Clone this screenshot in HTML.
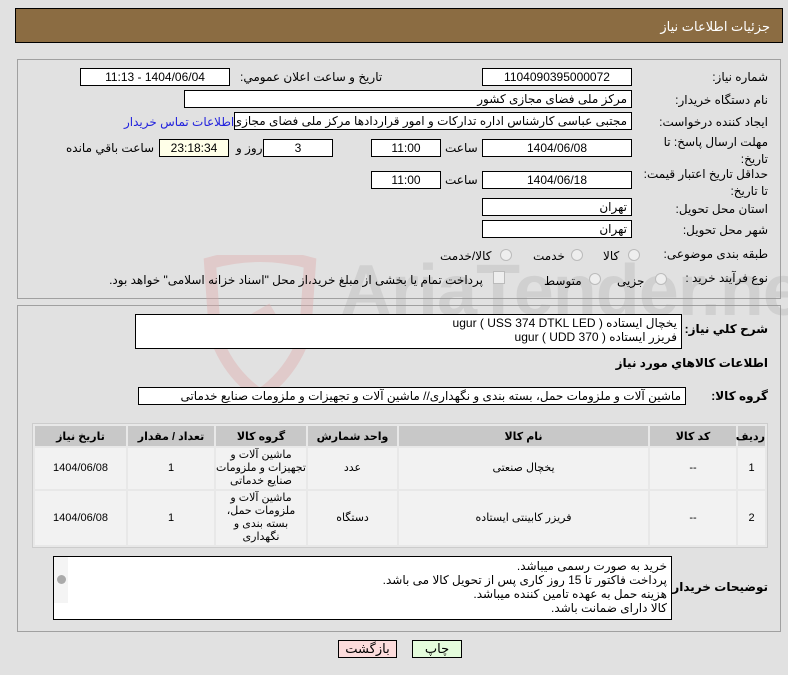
<!DOCTYPE html>
<html><head><meta charset="utf-8"><style>
body{margin:0;width:788px;height:675px;background:#e1e1e1;font-family:"Liberation Sans","DejaVu Sans",sans-serif;font-size:12px;color:#000;position:relative;overflow:hidden}
.a{position:absolute}
.hd{left:15px;top:8px;width:766px;height:33px;background:#8b6c42;border:1px solid #000}
.hd span{position:absolute;right:12px;top:10px;color:#fff;font-size:13px}
.pn{border:1px solid #a0a0a0}
.bx{position:absolute;background:#fff;border:1px solid #000;height:16px;line-height:16px;font-size:12px;direction:rtl;white-space:nowrap;overflow:hidden}
.c{text-align:center}
.r{padding-right:4px}
.l{position:absolute;direction:rtl;white-space:nowrap;font-size:12px}
.b{font-weight:bold;font-size:12px}
.rad{position:absolute;width:10px;height:10px;border-radius:50%;border:1px solid #bbb;background:#eee}
table{position:absolute;left:32px;top:423px;width:736px;border-collapse:separate;border-spacing:2px;background:#e8e8e8;border:1px solid #ccc;direction:rtl;font-size:11px;table-layout:fixed}
th{background:#c8c8c8;height:20px;font-weight:bold;padding:0}
td{background:#f2f2f2;text-align:center;padding:0;line-height:13px;overflow:hidden}
</style></head><body>
<div class="a hd"><span>جزئیات اطلاعات نیاز</span></div>
<div class="a pn" style="left:17px;top:59px;width:762px;height:238px"></div>
<div class="a pn" style="left:17px;top:305px;width:762px;height:325px"></div>

<svg class="a" style="left:200px;top:255px;opacity:.4" width="120" height="160" viewBox="0 0 120 160"><path d="M10 8 Q60 -6 110 8 L105 80 Q92 118 60 140 Q28 118 15 80 Z" fill="none" stroke="#e0a8a8" stroke-width="12"/><rect x="45" y="55" width="30" height="14" fill="#e0b0b0" transform="rotate(-30 60 62)"/></svg>
<div class="a" style="left:340px;top:250px;width:448px;height:110px;overflow:hidden;opacity:.22"><div style="font-size:72px;color:#999;font-weight:bold;white-space:nowrap;letter-spacing:-1px">AriaTender.neT</div></div>

<div class="l" style="right:20px;top:70px">شماره نیاز:</div>
<div class="bx c" style="left:482px;top:68px;width:148px">1104090395000072</div>
<div class="l" style="left:240px;top:70px">تاریخ و ساعت اعلان عمومي:</div>
<div class="bx c" style="left:80px;top:68px;width:148px">1404/06/04 - 11:13</div>

<div class="l" style="right:20px;top:93px">نام دستگاه خریدار:</div>
<div class="bx r" style="left:184px;top:90px;width:442px">مرکز ملی فضای مجازی کشور</div>

<div class="l" style="right:20px;top:115px">ایجاد کننده درخواست:</div>
<div class="bx r" style="left:234px;top:112px;width:392px">مجتبی عباسی کارشناس اداره تدارکات و امور قراردادها مرکز ملی فضای مجازی</div>
<div class="l" style="left:124px;top:115px;color:#2222dd">اطلاعات تماس خریدار</div>

<div class="l" style="right:20px;top:134px;line-height:17px;text-align:right">مهلت ارسال پاسخ: تا<br>تاریخ:</div>
<div class="bx c" style="left:482px;top:139px;width:148px">1404/06/08</div>
<div class="l" style="left:445px;top:141px">ساعت</div>
<div class="bx c" style="left:371px;top:139px;width:68px">11:00</div>
<div class="bx c" style="left:263px;top:139px;width:68px">3</div>
<div class="l" style="left:236px;top:141px">روز و</div>
<div class="bx c" style="left:159px;top:139px;width:68px;background:#ffffe8">23:18:34</div>
<div class="l" style="left:66px;top:141px">ساعت باقي مانده</div>

<div class="l" style="right:20px;top:166px;line-height:17px;text-align:right">حداقل تاریخ اعتبار قیمت:<br>تا تاریخ:</div>
<div class="bx c" style="left:482px;top:171px;width:148px">1404/06/18</div>
<div class="l" style="left:445px;top:173px">ساعت</div>
<div class="bx c" style="left:371px;top:171px;width:68px">11:00</div>

<div class="l" style="right:20px;top:202px">استان محل تحویل:</div>
<div class="bx r" style="left:482px;top:198px;width:144px">تهران</div>
<div class="l" style="right:20px;top:223px">شهر محل تحویل:</div>
<div class="bx r" style="left:482px;top:220px;width:144px">تهران</div>

<div class="l" style="right:20px;top:247px">طبقه بندی موضوعی:</div>
<div class="rad" style="left:628px;top:249px"></div><div class="l" style="left:603px;top:249px">کالا</div>
<div class="rad" style="left:571px;top:249px"></div><div class="l" style="left:533px;top:249px">خدمت</div>
<div class="rad" style="left:500px;top:249px"></div><div class="l" style="left:440px;top:249px">کالا/خدمت</div>

<div class="l" style="right:20px;top:271px">نوع فرآیند خرید :</div>
<div class="rad" style="left:655px;top:273px"></div><div class="l" style="left:617px;top:274px">جزیی</div>
<div class="rad" style="left:589px;top:273px"></div><div class="l" style="left:544px;top:274px">متوسط</div>
<div class="a" style="left:493px;top:271px;width:10px;height:11px;border:1px solid #bbb;background:#eee"></div>
<div class="l" style="left:101px;top:273px;width:382px;overflow:hidden;text-align:right">پرداخت تمام یا بخشی از مبلغ خرید،از محل "اسناد خزانه اسلامی" خواهد بود.</div>

<div class="l b" style="right:20px;top:322px">شرح کلي نياز:</div>
<div class="bx r" style="left:135px;top:314px;width:541px;height:32px;line-height:14px;font-size:12px;padding-top:1px">یخچال ایستاده ( ugur ( USS 374 DTKL LED<br>فریزر ایستاده ( ugur ( UDD 370</div>
<div class="l b" style="right:20px;top:356px">اطلاعات کالاهاي مورد نياز</div>
<div class="l b" style="right:20px;top:389px">گروه کالا:</div>
<div class="bx r" style="left:138px;top:387px;width:542px">ماشین آلات و ملزومات حمل، بسته بندی و نگهداری// ماشین آلات و تجهیزات و ملزومات صنایع خدماتی</div>

<table>
<colgroup><col style="width:27px"><col style="width:86px"><col style="width:249px"><col style="width:89px"><col style="width:90px"><col style="width:86px"><col></colgroup>
<tr><th>ردیف</th><th>کد کالا</th><th>نام کالا</th><th>واحد شمارش</th><th>گروه کالا</th><th>تعداد / مقدار</th><th>تاریخ نیاز</th></tr>
<tr style="height:41px"><td>1</td><td>--</td><td>یخچال صنعتی</td><td>عدد</td><td>ماشین آلات و تجهیزات و ملزومات صنایع خدماتی</td><td>1</td><td>1404/06/08</td></tr>
<tr style="height:54px"><td>2</td><td>--</td><td>فریزر کابینتی ایستاده</td><td>دستگاه</td><td>ماشین آلات و ملزومات حمل، بسته بندی و نگهداری</td><td>1</td><td>1404/06/08</td></tr>
</table>

<div class="l b" style="right:20px;top:580px">توضیحات خریدار:</div>
<div class="bx r" style="left:53px;top:556px;width:613px;height:60px;line-height:14px;font-size:12px;padding-top:2px">خرید به صورت رسمی میباشد.<br>پرداخت فاکتور تا 15 روز کاری پس از تحویل کالا می باشد.<br>هزینه حمل به عهده تامین کننده میباشد.<br>کالا دارای ضمانت باشد.</div>
<div class="a" style="left:54px;top:557px;width:14px;height:46px;background:#f4f4f4"><div style="margin:18px 0 0 3px;width:9px;height:9px;border-radius:50%;background:#aaa"></div></div>

<div class="a c" style="left:338px;top:640px;width:57px;height:16px;line-height:16px;border:1px solid #000;background:#fcdcdc;font-size:13px">بازگشت</div>
<div class="a c" style="left:412px;top:640px;width:48px;height:16px;line-height:16px;border:1px solid #000;background:#e4fcdc;font-size:13px">چاپ</div>
</body></html>
